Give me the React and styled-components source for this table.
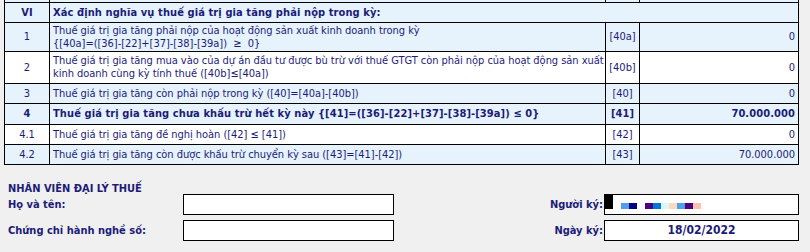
import React from 'react';
import styled, {createGlobalStyle} from "styled-components";

const GlobalStyle = createGlobalStyle`
  body {
    margin: 0;
    background: #f0f0f0;
    font-family: "DejaVu Sans", "Liberation Sans", sans-serif;
    font-stretch: condensed;
    font-size: 11px;
    color: #1c1c78;
  }
`

const Page = styled.div`
  width: 810px;
  height: 252px;
  overflow: hidden;
  padding-left: 4px;
  box-sizing: border-box;
`

const Table = styled.table`
  width: 795px;
  border-collapse: collapse;
  table-layout: fixed;
`

const Row = styled.tr`
  height: ${p => p.$h || 20}px;
  background: ${p => p.$tint ? '#e6f2fc' : '#ffffff'};
  font-weight: ${p => p.$bold ? 'bold' : 'normal'};
  letter-spacing: ${p => p.$bold ? '0.1px' : '-0.04px'};
`

const Cell = styled.td`
  border: 1px solid #000;
  padding: 0 3px;
  white-space: nowrap;
  line-height: 13px;
  text-align: ${p => p.$align || 'left'};
  vertical-align: middle;
`

const TextCell = styled(Cell)`
  padding: 0 0 0 3px;
`

const StubCell = styled.td`
  border: 1px solid #000;
  border-top: none;
  padding: 0;
  height: 1px;
  font-size: 0;
  line-height: 0;
`

const NoCell = styled(Cell)`
  text-align: center;
`

const SectionTitle = styled(TextCell)`
  font-weight: bold;
  letter-spacing: 0.1px;
`

const Footer = styled.div`
  width: 791px;
  margin: 17px 0 0 4px;
`

const Heading = styled.div`
  font-weight: bold;
  line-height: 13px;
  height: 12px;
`

const FieldGrid = styled.div`
  display: grid;
  grid-template-columns: 175px 211px 210px 195px;
  grid-auto-rows: 21px;
  row-gap: 5px;
  align-items: center;
  font-weight: bold;
`

const Label = styled.div`
  text-align: ${p => p.$right ? 'right' : 'left'};
  padding-right: ${p => p.$right ? '1px' : '0'};
`

const Field = styled.div`
  height: 21px;
  box-sizing: border-box;
  border: 1px solid #000;
  background: #fff;
  display: flex;
  align-items: center;
  justify-content: ${p => p.$center ? 'center' : 'flex-start'};
  font-size: ${p => p.$center ? '12px' : '11px'};
`

const SignField = styled(Field)`
  align-items: flex-start;
`

const Mark = styled.span`
  display: block;
  width: 8px;
  height: 14px;
  background: #000;
`

const Blocks = styled.div`
  display: flex;
  margin: 8px 0 0 8px;
`

const Block = styled.span`
  width: 8px;
  height: 6px;
  background: ${p => p.$c};
`

const rows = [
  {no: '1', lines: ['Thuế giá trị gia tăng phải nộp của hoạt động sản xuất kinh doanh trong kỳ', '{[40a]=([36]-[22]+[37]-[38]-[39a])\u00a0\u00a0≥\u00a0\u00a00}'], code: '[40a]', value: '0', tint: true, h: 29},
  {no: '2', lines: ['Thuế giá trị gia tăng mua vào của dự án đầu tư được bù trừ với thuế GTGT còn phải nộp của hoạt động sản xuất', 'kinh doanh cùng kỳ tính thuế ([40b]≤[40a])'], code: '[40b]', value: '0', h: 32},
  {no: '3', lines: ['Thuế giá trị gia tăng còn phải nộp trong kỳ ([40]=[40a]-[40b])'], code: '[40]', value: '0', tint: true},
  {no: '4', lines: ['Thuế giá trị gia tăng chưa khấu trừ hết kỳ này {[41]=([36]-[22]+[37]-[38]-[39a]) ≤ 0}'], code: '[41]', value: '70.000.000', tint: true, bold: true, h: 21},
  {no: '4.1', lines: ['Thuế giá trị gia tăng đề nghị hoàn ([42] ≤ [41])'], code: '[42]', value: '0'},
  {no: '4.2', lines: ['Thuế giá trị gia tăng còn được khấu trừ chuyển kỳ sau ([43]=[41]-[42])'], code: '[43]', value: '70.000.000', tint: true},
];

// redacted signer name, drawn as coloured pixels
const signColors = ['#4fa0e8', '#000080', 'transparent', '#4b0082', '#0078d7', '#d8f8ff', '#ffd8c0', '#4fa0e8', '#4b0082', '#ffc0b0'];

const App = () => (
    <Page>
        <GlobalStyle/>
        <Table>
            <colgroup>
                <col style={{width: 45}}/>
                <col style={{width: 556}}/>
                <col style={{width: 34}}/>
                <col style={{width: 159}}/>
            </colgroup>
            <tbody>
            <Row $tint $h={2}>
                <StubCell/><StubCell/><StubCell/><StubCell/>
            </Row>
            <Row $tint $h={20}>
                <NoCell><strong>VI</strong></NoCell>
                <SectionTitle colSpan={3}>Xác định nghĩa vụ thuế giá trị gia tăng phải nộp trong kỳ:</SectionTitle>
            </Row>
            {rows.map(r => (
                <Row key={r.no} $tint={r.tint} $bold={r.bold} $h={r.h}>
                    <NoCell>{r.no}</NoCell>
                    <TextCell>{r.lines.map((l, i) => <div key={i}>{l}</div>)}</TextCell>
                    <Cell $align="center">{r.code}</Cell>
                    <Cell $align="right">{r.value}</Cell>
                </Row>
            ))}
            </tbody>
        </Table>

        <Footer>
            <Heading>NHÂN VIÊN ĐẠI LÝ THUẾ</Heading>
            <FieldGrid>
                <Label>Họ và tên:</Label>
                <Field/>
                <Label $right>Người ký:</Label>
                <SignField>
                    <Mark/>
                    <Blocks>
                        {signColors.map((c, i) => <Block key={i} $c={c}/>)}
                    </Blocks>
                </SignField>
                <Label>Chứng chỉ hành nghề số:</Label>
                <Field/>
                <Label $right>Ngày ký:</Label>
                <Field $center>18/02/2022</Field>
            </FieldGrid>
        </Footer>
    </Page>
);

export default App;
